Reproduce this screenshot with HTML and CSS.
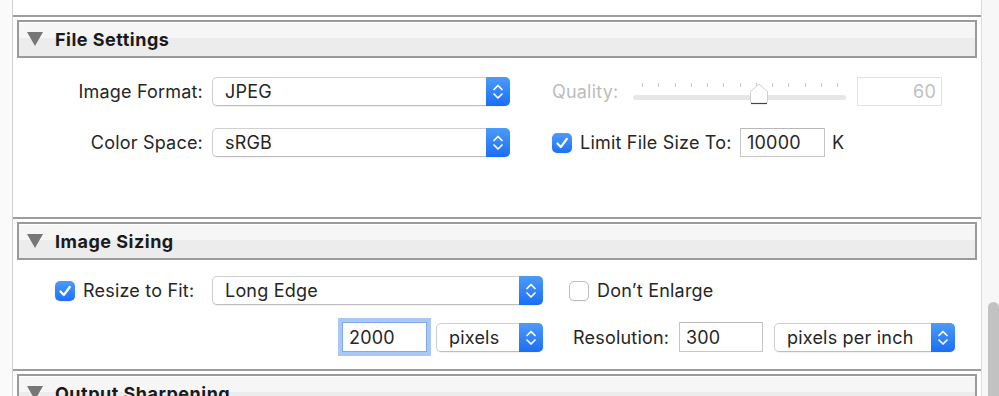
FILE: index.html
```html
<!DOCTYPE html>
<html lang="en">
<head>
  <meta charset="UTF-8" />
  <title>Export Settings</title>
  <link rel="stylesheet" href="styles.css">
</head>
<body>
  <div class="window">
    <div class="panel">
      <div class="top-space"></div>

      <section class="section">
        <div class="section-head">
          <span class="disclosure"></span>
          <h3>File Settings</h3>
        </div>
        <div class="section-body body-file">
          <div class="row">
            <label class="field-label">Image Format:</label>
            <div class="popup popup-format">
              <span class="popup-value">JPEG</span>
              <span class="popup-arrows">
                <svg viewBox="0 0 24 29" width="24" height="29"><path d="M8 12.5 L12 8.5 L16 12.5 M8 17 L12 21 L16 17" /></svg>
              </span>
            </div>
            <span class="dim-label quality-label">Quality:</span>
            <div class="slider">
              <div class="ticks">
                <i></i><i></i><i></i><i></i><i></i><i></i><i></i><i></i><i></i><i></i><i></i><i></i><i></i>
              </div>
              <div class="track"></div>
              <svg class="thumb" viewBox="0 0 20 22" width="20" height="22">
                <path d="M1.5 8.5 L10 1 L18.5 8.5 L18.5 18.5 Q18.5 20.5 16.5 20.5 L3.5 20.5 Q1.5 20.5 1.5 18.5 Z" fill="#fff" stroke="#cfcfcf" />
                <path d="M2 20.5 L18 20.5" stroke="#444" stroke-width="1.2" />
              </svg>
            </div>
            <input class="text-field field-disabled" value="60" disabled>
          </div>

          <div class="row row-second">
            <label class="field-label">Color Space:</label>
            <div class="popup popup-format">
              <span class="popup-value">sRGB</span>
              <span class="popup-arrows">
                <svg viewBox="0 0 24 29" width="24" height="29"><path d="M8 12.5 L12 8.5 L16 12.5 M8 17 L12 21 L16 17" /></svg>
              </span>
            </div>
            <span class="checkbox checked limit-check">
              <svg viewBox="0 0 20 20" width="20" height="20"><path d="M5.5 10.5 L8.8 14 L14.8 6" /></svg>
            </span>
            <span class="check-text limit-text">Limit File Size To:</span>
            <input class="text-field size-field" value="10000">
            <span class="unit">K</span>
          </div>
        </div>
      </section>

      <section class="section">
        <div class="section-head">
          <span class="disclosure"></span>
          <h3>Image Sizing</h3>
        </div>
        <div class="section-body body-sizing">
          <div class="row">
            <div class="check-cell">
              <span class="checkbox checked">
                <svg viewBox="0 0 20 20" width="20" height="20"><path d="M5.5 10.5 L8.8 14 L14.8 6" /></svg>
              </span>
              <span class="check-text">Resize to Fit:</span>
            </div>
            <div class="popup popup-fit">
              <span class="popup-value">Long Edge</span>
              <span class="popup-arrows">
                <svg viewBox="0 0 24 29" width="24" height="29"><path d="M8 12.5 L12 8.5 L16 12.5 M8 17 L12 21 L16 17" /></svg>
              </span>
            </div>
            <span class="checkbox enlarge-check"></span>
            <span class="check-text">Don’t Enlarge</span>
          </div>

          <div class="row row-dims">
            <input class="text-field focused" value="2000">
            <div class="popup popup-units">
              <span class="popup-value">pixels</span>
              <span class="popup-arrows">
                <svg viewBox="0 0 24 29" width="24" height="29"><path d="M8 12.5 L12 8.5 L16 12.5 M8 17 L12 21 L16 17" /></svg>
              </span>
            </div>
            <span class="res-label">Resolution:</span>
            <input class="text-field res-field" value="300">
            <div class="popup popup-res">
              <span class="popup-value">pixels per inch</span>
              <span class="popup-arrows">
                <svg viewBox="0 0 24 29" width="24" height="29"><path d="M8 12.5 L12 8.5 L16 12.5 M8 17 L12 21 L16 17" /></svg>
              </span>
            </div>
          </div>
        </div>
      </section>

      <section class="section">
        <div class="section-head">
          <span class="disclosure"></span>
          <h3>Output Sharpening</h3>
        </div>
      </section>
    </div>

    <div class="scrollbar">
      <div class="scroll-thumb"></div>
    </div>
  </div>
</body>
</html>
```

FILE: styles.css
```css
html, body {
  margin: 0;
  height: 100%;
}

body {
  font-family: Inter, "Noto Sans", sans-serif;
  font-size: 18px;
  letter-spacing: 0.2px;
  color: #262626;
  background: #fafafa;
  overflow: hidden;
}

.window {
  display: flex;
  height: 396px;
}

.panel {
  margin-left: 12px;
  width: 968px;
  background: #fff;
  border-left: 1px solid #d2d2d2;
  border-right: 1px solid #dcdcdc;
  overflow: hidden;
}

.top-space {
  height: 15px;
}

.section {
  border-top: 2px solid #9d9d9d;
  padding: 3px 4px 0;
}

.section-head {
  height: 38px;
  box-sizing: border-box;
  border: 2px solid #9a9a9a;
  box-shadow: inset 0 1px 0 #fff;
  background: linear-gradient(#f6f6f6 0, #f6f6f6 48%, #ececec 48%, #ececec 100%);
  display: flex;
  align-items: center;
  padding-left: 8px;
}

.disclosure {
  width: 0;
  height: 0;
  border-left: 8.5px solid transparent;
  border-right: 8.5px solid transparent;
  border-top: 14px solid #777;
  margin-right: 12px;
}

.section-head h3 {
  margin: 0;
  font-size: 18px;
  font-weight: 700;
  letter-spacing: 0.5px;
  color: #1a1a1a;
}

.section-body {
  box-sizing: border-box;
}

.body-file {
  height: 159px;
  padding-top: 19px;
}

.body-sizing {
  height: 109px;
  padding-top: 16px;
}

.row {
  display: flex;
  align-items: center;
  height: 29px;
}

.row-second {
  margin-top: 22px;
}

.row-dims {
  margin-top: 17px;
  height: 30px;
}

.field-label {
  width: 186px;
  margin-right: 9px;
  text-align: right;
}

/* popup buttons */
.popup {
  display: flex;
  height: 29px;
  box-sizing: border-box;
  border: 1px solid #d0d0d0;
  border-bottom-color: #bdbdbd;
  border-radius: 5px;
  background: #fff;
  box-shadow: 0 1px 1px rgba(0, 0, 0, 0.06);
}

.popup-value {
  flex: 1;
  padding-left: 12px;
  line-height: 27px;
  white-space: nowrap;
}

.popup-arrows {
  width: 24px;
  margin: -1px -1px -1px 0;
  border-radius: 0 5px 5px 0;
  background: linear-gradient(#4b9bfb, #1b6ef5);
  display: flex;
  align-items: center;
}

.popup-arrows svg path {
  fill: none;
  stroke: #fff;
  stroke-width: 1.7;
  stroke-linecap: round;
  stroke-linejoin: round;
}

.popup-format {
  width: 298px;
}

.popup-fit {
  width: 331px;
}

.popup-units {
  width: 107px;
  height: 29px;
  margin-left: 9px;
}

.popup-res {
  width: 181px;
  height: 29px;
  margin-left: 11px;
}

/* quality slider (disabled) */
.dim-label {
  color: #bdbdbd;
}

.quality-label {
  margin-left: 42px;
  width: 81px;
}

.slider {
  position: relative;
  width: 213px;
  height: 29px;
  display: flex;
  flex-direction: column;
}

.ticks {
  display: flex;
  justify-content: space-between;
  margin: 6px 8px 0 9px;
  height: 4px;
}

.ticks i {
  width: 1px;
  background: #c8c8c8;
}

.track {
  margin-top: 8px;
  height: 5px;
  border-radius: 3px;
  background: #e6e6e6;
}

.thumb {
  position: absolute;
  left: 116px;
  top: 6px;
}

.text-field {
  font: inherit;
  letter-spacing: inherit;
  height: 29px;
  box-sizing: border-box;
  border: 1px solid #c6c6c6;
  border-top-color: #b8b8b8;
  background: #fff;
  color: #262626;
  padding: 0 6px;
  outline: none;
}

.field-disabled {
  width: 85px;
  margin-left: 11px;
  border-color: #e2e2e2;
  color: #c0c0c0;
  text-align: right;
  padding-right: 5px;
}

/* checkboxes */
.checkbox {
  width: 20px;
  height: 20px;
  box-sizing: border-box;
  border-radius: 5px;
  border: 1px solid #bdbdbd;
  background: #fff;
  box-shadow: 0 1px 1px rgba(0, 0, 0, 0.06);
  flex: none;
}

.checkbox.checked {
  border: none;
  background: linear-gradient(#4c9cfb, #1f70f5);
}

.checkbox svg path {
  fill: none;
  stroke: #fff;
  stroke-width: 2.2;
  stroke-linecap: round;
  stroke-linejoin: round;
}

.check-text {
  margin-left: 8px;
  white-space: nowrap;
}

.limit-check {
  margin-left: 42px;
}

.limit-text {
  width: 160px;
}

.size-field {
  width: 85px;
}

.unit {
  margin-left: 7px;
}

.check-cell {
  width: 195px;
  display: flex;
  align-items: center;
  padding-left: 38px;
  box-sizing: border-box;
}

.enlarge-check {
  margin-left: 26px;
}

.focused {
  width: 85px;
  height: 30px;
  margin-left: 325px;
  border-color: #7ea9ea;
  box-shadow: 0 0 0 4px #a9c8f5;
}

.res-label {
  margin-left: 30px;
  width: 106px;
}

.res-field {
  width: 84px;
  height: 30px;
}

/* scrollbar */
.scrollbar {
  flex: 1;
  background: #f7f7f7;
  padding-top: 302px;
  padding-left: 6px;
}

.scroll-thumb {
  height: 120px;
  border-radius: 6px;
  background: #c2c2c2;
}
```
